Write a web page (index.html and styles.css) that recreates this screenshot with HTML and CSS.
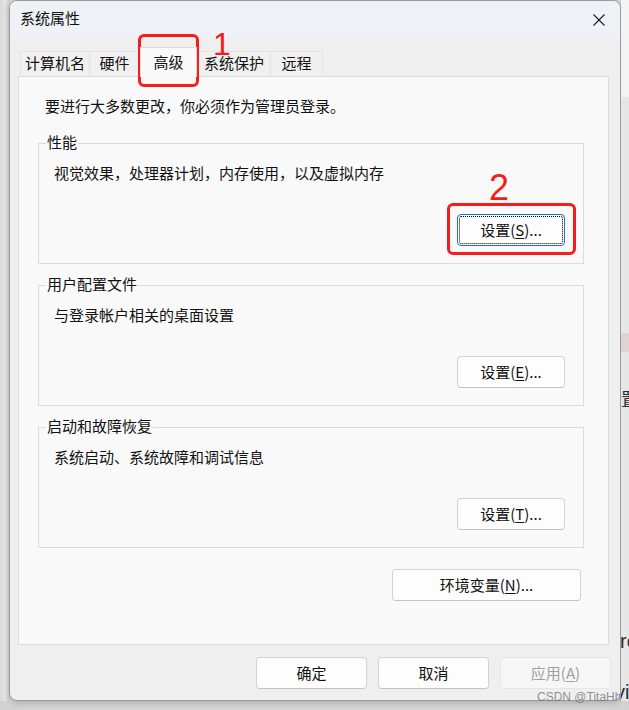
FILE: index.html
```html
<!DOCTYPE html>
<html lang="zh-CN">
<head>
  <meta charset="UTF-8" />
  <meta name="viewport" content="width=device-width, initial-scale=1.0" />
  <title>系统属性</title>
  <link rel="stylesheet" href="styles.css">
</head>
<body>
  <div class="screen">
    <div class="edge"></div>

    <div class="window">
      <div class="titlebar">
        <span class="title">系统属性</span>
        <svg class="close" width="12" height="12" viewBox="0 0 12 12">
          <path d="M0.5 0.5L11.5 11.5M11.5 0.5L0.5 11.5" stroke="#1b1b1b" stroke-width="1.1" fill="none" />
        </svg>
      </div>

      <div class="tabs">
        <div class="tab tab-name">计算机名</div>
        <div class="tab tab-hw">硬件</div>
        <div class="tab tab-adv active">高级</div>
        <div class="tab tab-prot">系统保护</div>
        <div class="tab tab-remote">远程</div>
      </div>

      <div class="panel">
        <p class="intro">要进行大多数更改，你必须作为管理员登录。</p>

        <fieldset class="group">
          <legend>性能</legend>
          <div class="group-body">
            <p>视觉效果，处理器计划，内存使用，以及虚拟内存</p>
            <div class="actions">
              <button class="btn focused">设置(<u>S</u>)...</button>
            </div>
          </div>
        </fieldset>

        <fieldset class="group">
          <legend>用户配置文件</legend>
          <div class="group-body">
            <p>与登录帐户相关的桌面设置</p>
            <div class="actions">
              <button class="btn">设置(<u>E</u>)...</button>
            </div>
          </div>
        </fieldset>

        <fieldset class="group">
          <legend>启动和故障恢复</legend>
          <div class="group-body">
            <p>系统启动、系统故障和调试信息</p>
            <div class="actions">
              <button class="btn">设置(<u>T</u>)...</button>
            </div>
          </div>
        </fieldset>

        <div class="actions env">
          <button class="btn wide">环境变量(<u>N</u>)...</button>
        </div>
      </div>

      <div class="footer">
        <button class="btn big">确定</button>
        <button class="btn big">取消</button>
        <button class="btn big" disabled>应用(<u>A</u>)</button>
      </div>
    </div>

    <div class="behind">
      <div class="behind-top"></div>
      <div class="behind-band"></div>
      <span class="frag frag-zhi">置</span>
      <span class="frag frag-ro">ro</span>
      <span class="frag frag-vi">vi</span>
    </div>

    <!-- annotations drawn over the screenshot -->
    <div class="mark mark-1"></div>
    <span class="num num-1">1</span>
    <div class="mark mark-2"></div>
    <span class="num num-2">2</span>
    <span class="watermark">CSDN @TitaHh</span>
  </div>
</body>
</html>
```

FILE: styles.css
```css
body {
  margin: 0;
  overflow: hidden;
  background-color: #d3d3d3;
  font-family: "Noto Sans CJK SC", "Noto Sans", sans-serif;
  font-size: 15px;
  color: #111;
}
p {
  margin: 0;
}
.screen {
  position: relative;
  display: flex;
  align-items: flex-start;
  width: 629px;
  height: 710px;
}
.edge {
  width: 9px;
  height: 701px;
  background: linear-gradient(to right, #d9d9d9, #e4e4e4 60%, #cfcfcf);
}

/* dialog window */
.window {
  width: 612px;
  height: 701px;
  box-sizing: border-box;
  border: 1px solid #9b9b9b;
  border-radius: 8px;
  background-color: #efefef;
  box-shadow: 0 2px 6px rgba(0, 0, 0, 0.18);
}
.titlebar {
  height: 37px;
  display: flex;
  align-items: center;
  justify-content: space-between;
  padding: 0 15px 0 10px;
  background-color: #eef1f5;
  border-radius: 7px 7px 0 0;
}
.title {
  line-height: 20px;
  margin-top: -3px;
}
.close {
  display: block;
}

/* tabs */
.tabs {
  display: flex;
  align-items: flex-end;
  margin-top: 9px;
  padding-left: 10px;
  height: 29px;
}
.tab {
  box-sizing: border-box;
  height: 25px;
  padding-top: 1px;
  line-height: 20px;
  text-align: center;
  background-color: #f0f0f0;
  border: 1px solid #e3e3e3;
  border-bottom: none;
}
.tab-name { width: 70px; }
.tab-hw { width: 50px; border-left: none; }
.tab-adv { width: 57px; }
.tab-prot { width: 74px; }
.tab-remote { width: 52px; border-left: none; }
.tab.active {
  position: relative;
  z-index: 1;
  height: 30px;
  padding-top: 4px;
  margin-bottom: -1px;
  background-color: #f9f9f9;
  border-color: #dcdcdc;
}

/* tab page */
.panel {
  box-sizing: border-box;
  height: 569px;
  margin: 0 11px 0 8px;
  padding: 19px 24px 0 19px;
  background-color: #f9f9f9;
  border: 1px solid #dcdcdc;
}
.intro {
  line-height: 20px;
  margin: 0 0 17px 7px;
}
.group {
  margin: 0 0 11px;
  padding: 0;
  min-inline-size: 0;
  border: 1px solid #dcdcdc;
}
.group legend {
  margin-left: 7px;
  padding: 0 1px 2px;
  line-height: 18px;
}
.group-body {
  padding: 10px 18px 17px 15px;
}
.group-body p {
  line-height: 20px;
}
.actions {
  display: flex;
  justify-content: flex-end;
  margin-top: 31px;
}
.actions.env {
  margin: 21px 3px 0 0;
}

/* buttons */
.btn {
  box-sizing: border-box;
  width: 108px;
  height: 32px;
  padding: 0 0 2px;
  font-family: inherit;
  font-size: 15px;
  color: #111;
  background-color: #fdfdfd;
  border: 1px solid #d3d3d3;
  border-bottom-color: #c4c4c4;
  border-radius: 4px;
}
.btn u {
  text-underline-offset: 2px;
}
.btn.focused {
  border-color: #1a73c8;
  outline: 1px dotted #000;
  outline-offset: -3px;
}
.btn.wide {
  width: 189px;
}
.btn.big {
  width: 111px;
}
.btn:disabled {
  color: #a0a0a0;
  background-color: #f6f6f6;
  border-color: #e6e6e6;
}
.footer {
  display: flex;
  justify-content: flex-end;
  gap: 11px;
  margin-top: 12px;
  padding-right: 9px;
}

/* window behind the dialog */
.behind {
  display: flex;
  flex-direction: column;
  width: 8px;
  height: 701px;
  overflow: hidden;
  background-color: #e6e6e6;
  font-family: "Liberation Sans", "Noto Sans CJK SC", sans-serif;
  color: #2a2a2a;
}
.behind-top {
  height: 97px;
  flex-shrink: 0;
  background-color: #f3f3f3;
}
.behind-band {
  height: 19px;
  flex-shrink: 0;
  margin-top: 236px;
  background-color: #ded4d4;
}
.frag {
  display: block;
  flex-shrink: 0;
  white-space: nowrap;
}
.frag-zhi {
  margin-top: 37px;
  font-family: "Noto Sans CJK SC", sans-serif;
  font-size: 18px;
  line-height: 18px;
}
.frag-ro {
  margin-top: 224px;
  margin-left: -1px;
  font-size: 20px;
  line-height: 20px;
}
.frag-vi {
  margin-top: 31px;
  margin-left: -6px;
  font-size: 20px;
  line-height: 20px;
}

/* red markup */
.mark {
  position: absolute;
  box-sizing: border-box;
  border: 3px solid #f51c1c;
  border-radius: 6px;
}
.mark-1 {
  left: 138px;
  top: 34px;
  width: 61px;
  height: 53px;
}
.mark-2 {
  left: 447px;
  top: 203px;
  width: 129px;
  height: 52px;
}
.num {
  position: absolute;
  font-family: "Liberation Sans", sans-serif;
  color: #f51c1c;
}
.num-1 {
  left: 213px;
  top: 28px;
  font-size: 32px;
  line-height: 32px;
}
.num-2 {
  left: 489px;
  top: 170px;
  font-size: 36px;
  line-height: 36px;
}
.watermark {
  position: absolute;
  left: 537px;
  top: 690px;
  font-family: "Liberation Sans", sans-serif;
  font-size: 12px;
  line-height: 14px;
  color: rgba(110, 110, 110, 0.75);
}
```
